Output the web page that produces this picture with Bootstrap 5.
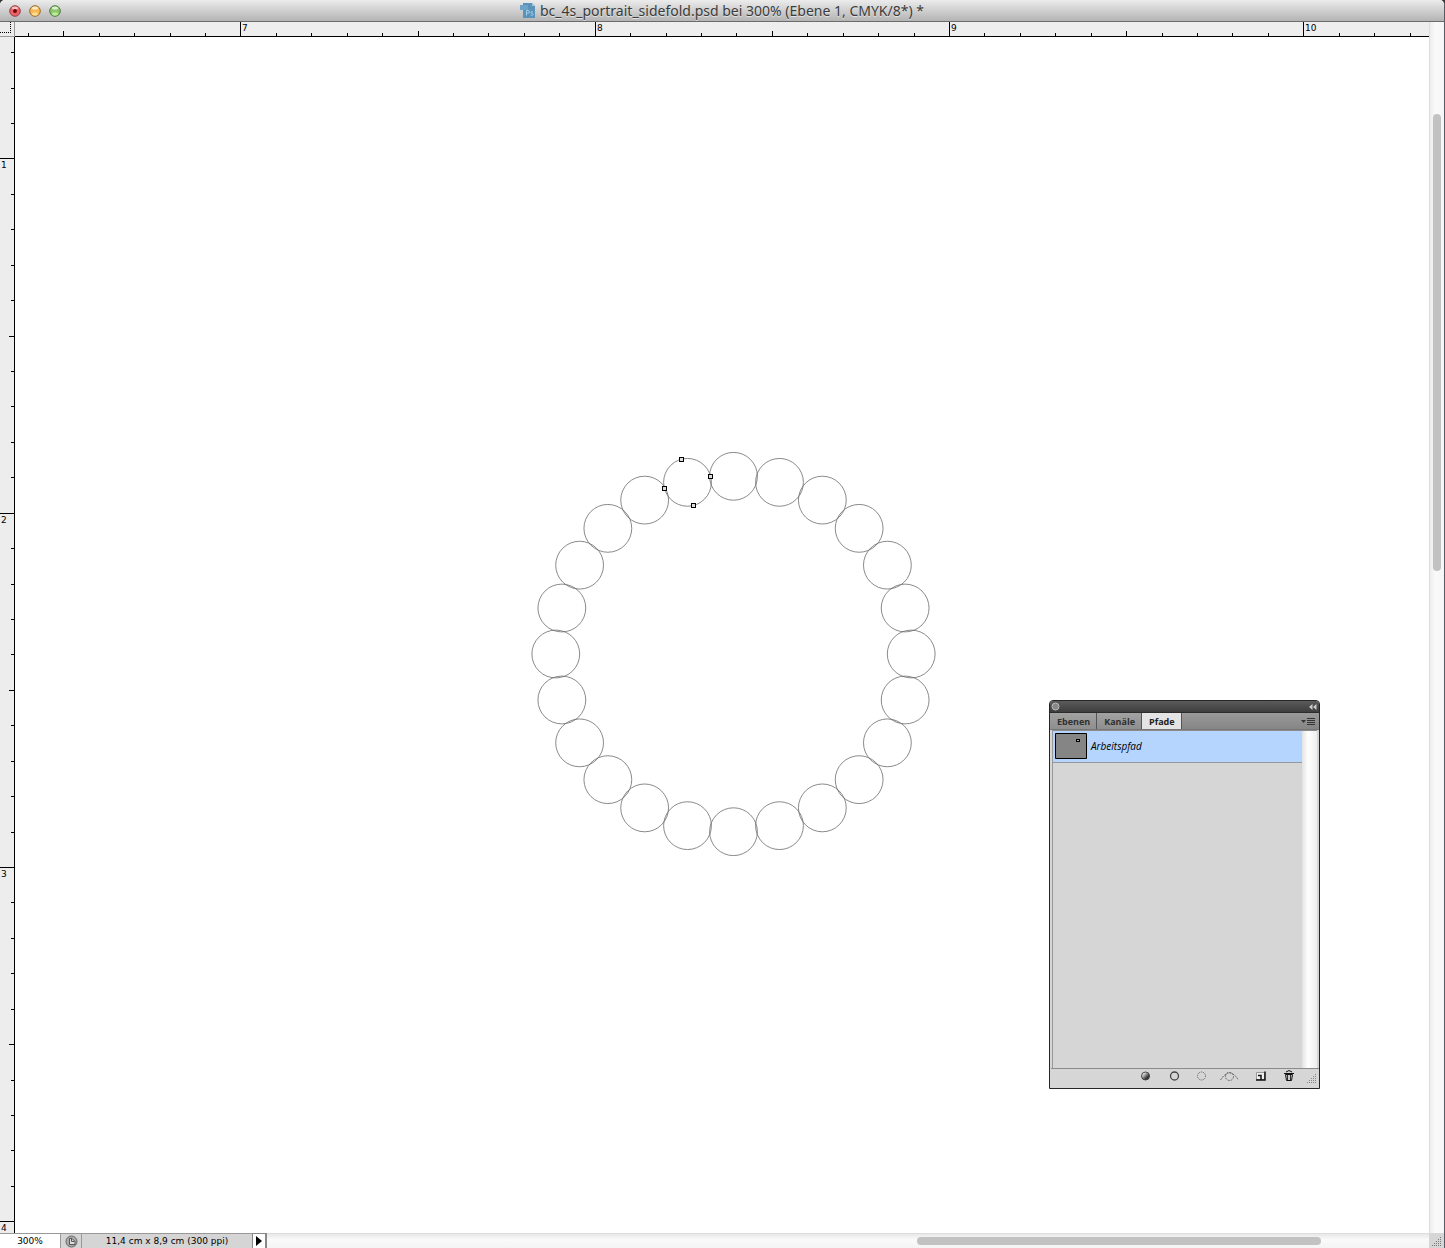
<!DOCTYPE html>
<html lang="de">
<head>
<meta charset="utf-8">
<meta name="viewport" content="width=device-width, initial-scale=1">
<title>bc_4s_portrait_sidefold.psd</title>
<link rel="stylesheet" href="https://cdn.jsdelivr.net/npm/bootstrap@5.3.0/dist/css/bootstrap.min.css">
<style>
  body { font-family: "DejaVu Sans", sans-serif; font-size: 9px; line-height: 12px; color: #000; background: #333; }
  button { border: 0; padding: 0; background: none; color: inherit; font: inherit; }
  svg { display: block; }
  .app-window { background: #fff; border-right: 1px solid #555c63; border-radius: 5px 5px 0 0; }
  .title-bar { height: 22px; background: linear-gradient(#ececec, #d2d2d2 45%, #b4b4b4); border-bottom: 1px solid #6b6b6b; }
  .title-text { font-family: "Noto Sans", sans-serif; font-size: 14px; line-height: 18px; color: #3b3b3b; text-shadow: 0 1px 0 #e4e4e4; }
  .lights { left: 9px; top: 5px; gap: 8px; }
  .ruler-row { height: 15px; }
  .ruler-corner { width: 15px; background: #ececec; border-right: 1px solid #999; border-bottom: 1px solid #999; }
  .ruler-corner::after { content: ""; display: block; width: 11px; height: 11px; border-right: 1px dotted #000; border-bottom: 1px dotted #000; }
  .ruler-top { background: #eee; border-bottom: 1px solid #000; }
  .ruler-left { width: 15px; background: #ededed; border-right: 1px solid #000; }
  .ruler-top svg, .ruler-left svg { position: absolute; inset: 0; width: 100%; height: 100%; }
  .scroll-v { width: 15px; background: linear-gradient(90deg, #ededed, #fafafa 40%, #f6f6f6); border-left: 1px solid #ddd; }
  .thumb-v { width: 8px; top: 7.6%; height: 37.7%; left: 3px; border-radius: 4px; background: #c2c2c2; }
  .status-bar { height: 15px; background: #d5d5d5; }
  .zoom-box { width: 60px; height: 15px; border: 0; border-radius: 0; padding: 0; font: inherit; text-align: center; border-top: 1px solid #999; background: #fff; }
  .status-icon { width: 22px; border: solid #999; border-width: 1px 1px 0 1px; background: #d5d5d5; }
  .status-info { width: 170px; border-top: 1px solid #999; line-height: 14px; }
  .status-more { width: 15px; border: solid #888; border-width: 1px 2px 0 1px; background: #fff; }
  .scroll-h { background: linear-gradient(#e8e8e8, #fafafa 40%, #f4f4f4); border-top: 1px solid #ddd; }
  .thumb-h { left: 55.9%; width: 34.8%; top: 3px; height: 8px; border-radius: 4px; background: #c2c2c2; }
  .size-grip { width: 15px; background: #d6d6d6; }
  .ring { left: 501px; top: 400px; }
  .paths-panel { left: 1034px; top: 663px; width: 271px; height: 389px; border: 1px solid #262626; border-radius: 4px 4px 0 0; background: #d6d6d6; overflow: hidden; }
  .panel-head { height: 11px; background: linear-gradient(#5a5a5a, #3e3e3e); padding: 0 2px 0 1px; }
  .panel-tabs { height: 18px; background: linear-gradient(#9a9a9a, #858585); border-top: 1px solid #2c2c2c; border-bottom: 1px solid #777; }
  .panel-tab { font-family: "Open Sans", sans-serif; font-weight: 700; color: #303030; padding: 1px 6px 0 7px; border-right: 1px solid #555; background: linear-gradient(#a2a2a2, #8e8e8e); }
  .panel-tab.active { background: #e4e4e4; color: #222; }
  .panel-body { margin: 0 2px; border-top: 1px solid #8b8b8b; border-left: 1px solid #999; }
  .path-item { height: 32px; background: #b5d5ff; border-bottom: 1px solid #94979c; padding: 0 0 2px 2px; gap: 4px; font-family: "Open Sans", sans-serif; font-size: 10px; font-style: italic; text-align: left; }
  .panel-scroll { width: 15px; background: linear-gradient(90deg, #e2e2e2, #fff 40%, #eee); }
  .panel-foot { height: 20px; margin-left: 1px; border-top: 1px solid #8b8b8b; }
</style>
<script src="https://cdn.jsdelivr.net/npm/bootstrap@5.3.0/dist/js/bootstrap.bundle.min.js"></script>
</head>
<body>
<div class="app-window d-flex flex-column vh-100 overflow-hidden">
  <header class="title-bar position-relative d-flex justify-content-center align-items-center flex-shrink-0">
    <div class="lights position-absolute d-flex">
      <button aria-label="Schließen"><svg width="12" height="12"><circle cx="6" cy="6" r="5.3" fill="#ed6268" stroke="#914247"/><ellipse cx="6" cy="3" rx="3" ry="1.5" fill="#fff" opacity=".6"/><circle cx="6" cy="6" r="2" fill="#6d0509"/></svg></button>
      <button aria-label="Minimieren"><svg width="12" height="12"><circle cx="6" cy="6" r="5.3" fill="#f6b955" stroke="#996830"/><ellipse cx="6" cy="3" rx="3" ry="1.5" fill="#fff" opacity=".7"/><ellipse cx="6" cy="9" rx="3" ry="1.7" fill="#ffe59a" opacity=".8"/></svg></button>
      <button aria-label="Zoomen"><svg width="12" height="12"><circle cx="6" cy="6" r="5.3" fill="#8cc66b" stroke="#4c783c"/><ellipse cx="6" cy="3" rx="3" ry="1.5" fill="#fff" opacity=".7"/><ellipse cx="6" cy="9" rx="3" ry="1.7" fill="#c9f3a5" opacity=".8"/></svg></button>
    </div>
    <svg class="me-1" width="16" height="17" viewBox="0 0 16 17"><path d="M3 1h9l3 3v12H3V8H0V3h3z" fill="#5b93b9"/><path d="M12 1v3h3z" fill="#a9cbe0"/><path d="M0 3h8v5H0z" fill="#6da3c7"/><path d="M6.500 13.500V8.500h1.500q1.500 0 1.500 1.300t-1.500 1.300H6.500M13 10q-2-.8-2 .5 0 .7 1 1t1 1q0 1.200-2.200.6" fill="none" stroke="#a6d2ee" stroke-width=".9"/></svg>
    <span class="title-text">bc_4s_portrait_sidefold.psd bei 300% (Ebene 1, CMYK/8*) *</span>
  </header>

  <div class="d-flex flex-grow-1 overflow-hidden">
    <div class="d-flex flex-column flex-grow-1 overflow-hidden">
      <div class="ruler-row d-flex flex-shrink-0">
        <div class="ruler-corner flex-shrink-0"></div>
        <div class="ruler-top position-relative flex-grow-1 overflow-hidden"><svg id="rulerTop"></svg></div>
      </div>
      <div class="d-flex flex-grow-1 overflow-hidden">
        <div class="ruler-left position-relative flex-shrink-0 overflow-hidden"><svg id="rulerLeft"></svg></div>
        <main class="position-relative flex-grow-1">
          <svg class="ring position-absolute" id="ring" width="435" height="434" viewBox="-217.5 -217 435 434" fill="none" stroke="#6c6c6c" stroke-width="0.8"></svg>

          <section class="paths-panel position-absolute d-flex flex-column" aria-label="Pfade">
            <div class="panel-head d-flex justify-content-between align-items-center flex-shrink-0">
              <button aria-label="Palette schließen"><svg width="9" height="9"><circle cx="4.500" cy="4.500" r="3.500" fill="#888" stroke="#bbb"/></svg></button>
              <button aria-label="Minimieren"><svg width="8" height="6"><path d="M3.500 0v6L0 3zM7.500 0v6L4 3z" fill="#ccc"/></svg></button>
            </div>
            <div class="panel-tabs d-flex flex-shrink-0" role="tablist">
              <button class="panel-tab" role="tab">Ebenen</button>
              <button class="panel-tab" role="tab">Kanäle</button>
              <button class="panel-tab active" role="tab" aria-selected="true">Pfade</button>
              <button class="ms-auto me-1" aria-label="Palettenmenü"><svg width="14" height="9"><path d="M0 3h5L2.500 6z" fill="#333"/><path d="M6 1.500h8M6 3.500h8M6 5.500h8M6 7.500h8" stroke="#333"/></svg></button>
            </div>
            <div class="panel-body d-flex flex-grow-1">
              <div class="flex-grow-1">
                <button class="path-item d-flex align-items-center w-100">
                  <svg width="32" height="26"><path d="M.5.5h31v25H.5z" fill="#858585" stroke="#000"/><rect x="21.500" y="6.500" width="3" height="2" fill="#aaa" stroke="#000"/></svg>
                  <span>Arbeitspfad</span>
                </button>
              </div>
              <div class="panel-scroll"></div>
            </div>
            <div class="panel-foot flex-shrink-0 position-relative">
              <svg width="267" height="18" fill="none">
                <defs><linearGradient id="ball" x2="1" y2="1"><stop offset=".2" stop-color="#eee"/><stop offset=".7" stop-color="#333"/></linearGradient></defs>
                <circle cx="94.500" cy="7" r="4" fill="url(#ball)" stroke="#444"/>
                <circle cx="123.500" cy="7" r="4" stroke="#444" stroke-width="1.300"/>
                <circle cx="150.500" cy="7" r="4" stroke="#555" stroke-dasharray="1 1"/>
                <g stroke="#666"><circle cx="178.500" cy="7.500" r="4" stroke-dasharray="2 1"/><path d="M169.500 11l3-4 4-3h4l4 3 3 4" stroke-dasharray="2 1"/></g>
                <path d="M205.500 3.500h8v7h-8z" fill="#eee" stroke="#999"/><path d="M205 11h9V2.500M207 6.500h3v4" stroke="#111" stroke-width="1.500"/>
                <path d="M234.500 5.500h7l-1 6h-5z" fill="#ccc" stroke="#111"/><path d="M233 4.500h10M235 3q3-3 6 0" stroke="#111"/><path d="M236.500 6v5M239.500 6v5" stroke="#333"/>
                <path d="M256 13.500h9M258 11.500h7M260 9.500h5M262 7.500h3M264 5.500h1" stroke="#888" stroke-dasharray="1 1"/>
              </svg>
            </div>
          </section>
        </main>
      </div>
    </div>
    <div class="scroll-v position-relative flex-shrink-0"><div class="thumb-v position-absolute"></div></div>
  </div>

  <footer class="status-bar d-flex flex-shrink-0">
    <input class="zoom-box" value="300%" aria-label="Zoomstufe">
    <button class="status-icon d-flex align-items-center justify-content-center" aria-label="Version Cue"><svg width="13" height="13"><circle cx="6.500" cy="6.500" r="5.500" fill="#aaa" stroke="#666"/><path d="M4.500 9.500v-6h2.500l3 3v3z" fill="#ddd" stroke="#555"/><path d="M6.500 3.500v3h3" stroke="#555" fill="none"/></svg></button>
    <div class="status-info text-center">11,4 cm x 8,9 cm (300 ppi)</div>
    <button class="status-more d-flex align-items-center justify-content-center" aria-label="Statusanzeige"><svg width="6" height="10"><path d="M0 0l6 5-6 5z"/></svg></button>
    <div class="scroll-h position-relative flex-grow-1"><div class="thumb-h position-absolute"></div></div>
    <div class="size-grip"><svg width="15" height="15"><path d="M3 12.500h9M5 10.500h7M7 8.500h5M9 6.500h3M11 4.500h1" stroke="#777" stroke-dasharray="1 1"/></svg></div>
  </footer>
</div>

<script>
  // Rulers: ten ticks per centimetre, a longer one at the half and a full one with its number.
  const CM = 354.3;
  function ruler(id, origin, vertical) {
    const svg = document.getElementById(id);
    const size = vertical ? svg.clientHeight : svg.clientWidth;
    let out = '';
    for (let i = Math.ceil(-origin / CM * 10); origin + i / 10 * CM < size; i++) {
      const p = Math.floor(origin + (i / 10) * CM);
      const len = i % 10 === 0 ? 15 : i % 5 === 0 ? 5 : 3;
      out += vertical
        ? `<rect x="${14 - len}" y="${p}" width="${len}" height="1"/>`
        : `<rect x="${p}" y="${14 - len}" width="1" height="${len}"/>`;
      if (i % 10 === 0) out += vertical
        ? `<text x="1" y="${p + 10}">${i / 10}</text>`
        : `<text x="${p + 2}" y="9">${i / 10}</text>`;
    }
    svg.innerHTML = out;
  }
  ruler('rulerTop', 225.9 - 7 * CM, false);
  ruler('rulerLeft', 121.9 - CM, true);

  // A ring of 24 circles; the one left of the top is selected and shows its four anchors.
  let shapes = '';
  for (let k = 0; k < 24; k++) {
    const a = k * Math.PI / 12;
    shapes += `<circle cx="${(177.7 * Math.sin(a)).toFixed(2)}" cy="${(-177.7 * Math.cos(a)).toFixed(2)}" r="23.9"/>`;
  }
  for (const [x, y] of [[-52, -194.5], [-23, -177.5], [-69, -165.5], [-40, -148.5]])
    shapes += `<rect x="${x - 2}" y="${y - 2}" width="4" height="4" fill="#ddd" stroke="#000" stroke-width="1"/>`;
  document.getElementById('ring').innerHTML = shapes;
</script>
</body>
</html>
